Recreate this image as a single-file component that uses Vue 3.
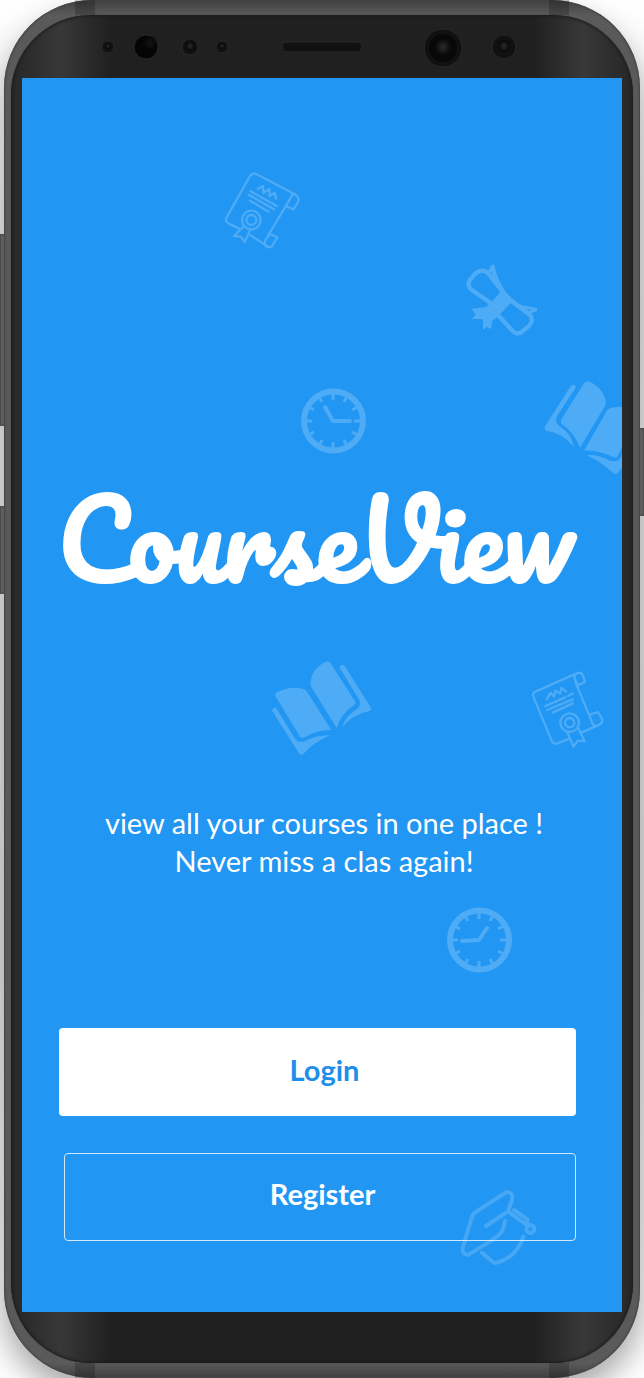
<script setup>
const ticks = Array.from({ length: 12 }, (_, i) => ({ angle: i * 30, inner: i % 3 === 0 ? 21 : 22 }))
const clocks = [
  { x: 333, y: 421, hands: 'M-8 -14L0 0H17' },
  { x: 479, y: 940, hands: 'M8 -12L0 0L-17 1' },
]
</script>

<template>
  <div class="page">
    <span class="key volume"></span>
    <span class="key assistant"></span>
    <span class="key power"></span>
    <div class="phone">
      <i class="seam top-left"></i><i class="seam top-right"></i>
      <i class="seam bottom-left"></i><i class="seam bottom-right"></i>
      <div class="bezel">
        <svg class="sensors" viewBox="11 15 622 63" aria-hidden="true">
          <defs>
            <radialGradient id="lens">
              <stop offset="0" stop-color="#2b2b2b" />
              <stop offset="1" stop-color="#050505" />
            </radialGradient>
          </defs>
          <g fill="#111" stroke="#282828">
            <circle cx="108" cy="47" r="6" />
            <circle cx="146" cy="47" r="12" fill="#050505" />
            <circle cx="190" cy="47" r="8" />
            <circle cx="222" cy="47" r="6" />
            <rect x="282" y="42" width="80" height="10" rx="5" />
            <circle cx="443" cy="48" r="19" />
            <circle cx="504" cy="47" r="12" />
          </g>
          <circle cx="443" cy="48" r="14" fill="#080808" />
          <circle cx="150" cy="43" r="7" fill="url(#lens)" opacity="0.4" />
          <g fill="url(#lens)">
            <circle cx="108" cy="46" r="3" />
            <circle cx="190" cy="46" r="5" />
            <circle cx="222" cy="46" r="3" />
            <circle cx="443" cy="47" r="9" />
            <circle cx="504" cy="46" r="6" />
          </g>
        </svg>

        <main class="screen">
          <svg class="doodles" viewBox="22 78 600 1234" preserveAspectRatio="xMidYMin slice" aria-hidden="true">
            <!-- certificates -->
            <g class="line" transform="translate(210 160) scale(.3333)">
              <path d="M88 206L55 190Q44 184 50 172L120 48Q128 36 140 43L253 102Q272 112 262 130L250 148L228 138L240 116Q246 104 253 102M236 124L166 240M122 226L172 259M166 240Q160 262 178 262Q186 262 190 252L202 232L180 222L166 240" />
              <circle cx="124" cy="180" r="28" /><circle cx="124" cy="180" r="15" />
              <path d="M98 202L72 228L92 230L104 246L120 212M122 94L180 127M186 130L200 138M116 104L192 148M120 122L176 155M143 87L159 78L160 99L178 87L179 108L194 98L198 116" />
            </g>
            <g class="line" transform="translate(520 660) scale(.3333)">
              <path d="M148 236L112 250Q102 254 96 244L40 110Q36 100 48 94L170 40Q186 34 190 50L195 66L174 76L164 56Q160 44 170 40M166 66L216 186M208 164L234 156L246 176Q250 190 234 196Q220 200 216 188L208 164M234 196L184 218" />
              <circle cx="149" cy="188" r="28" /><circle cx="149" cy="188" r="14" />
              <path d="M142 216L160 260L174 242L194 244L176 206M76 138L136 112M144 108L158 101M82 150L158 118M98 158L158 130M80 118L92 98L102 110L106 92L120 100L124 84L138 94" />
            </g>
            <!-- rolled diploma -->
            <g class="solid" transform="translate(455 250) scale(.3333)">
              <path class="roll" d="M108 160L48 118Q34 104 46 88L62 70Q80 56 98 68L140 122M128 194L174 244Q186 256 200 246L224 226Q236 210 226 196L166 150" />
              <path fill-rule="evenodd" d="M98 68Q106 44 114 43Q120 44 120 52Q124 82 150 122Q176 156 202 166L244 173Q250 179 244 184L222 192Q198 184 168 158L128 200L112 212L108 238L96 230L84 240L84 208L50 206L62 194L50 176L92 172L110 156L136 126Q112 96 98 68ZM108 62L107 74L114 80ZM208 178L222 183L232 179Z" />
            </g>
            <!-- open books -->
            <g class="solid" transform="translate(530 370) scale(.3333)">
              <path d="M122 48Q134 40 138 52L80 140Q74 156 88 168Q124 190 132 230Q96 188 48 182Q42 176 46 168Z" />
              <path d="M162 40Q170 30 182 36Q232 66 226 106L150 234Q134 190 96 162Q90 156 94 148Z" />
              <path d="M232 120Q244 106 290 113V206L264 256Q262 264 252 262Q200 238 162 242Z" />
              <path d="M170 256Q200 252 240 272Q258 278 270 266L290 232V276L264 308Q258 314 250 310Q210 272 170 256Z" />
            </g>
            <g class="solid" transform="translate(260 650) scale(.3333)">
              <path d="M46 138Q44 130 52 126Q100 104 138 120L214 240Q170 240 134 262Q124 266 120 260Z" />
              <path d="M152 108Q148 60 200 34Q208 32 212 40L284 152Q290 160 282 166Q244 190 230 234Z" />
              <path d="M36 182Q40 168 50 176L104 264Q114 280 134 274Q170 254 210 256Q160 278 130 312Q122 318 116 308Z" />
              <path d="M238 52Q244 40 254 48L332 172Q336 182 326 184Q280 192 246 232Q254 200 292 176Q304 166 298 150Z" />
            </g>
            <!-- clocks -->
            <g v-for="clock in clocks" :key="clock.y" class="clock" :transform="`translate(${clock.x} ${clock.y})`">
              <circle cx=".5" r="29.5" />
              <path v-for="tick in ticks" :key="tick.angle" class="tick" :d="`M0 -27V-${tick.inner}`" :transform="`rotate(${tick.angle})`" />
              <path class="hands" :d="clock.hands" />
            </g>
            <!-- graduation cap -->
            <g class="line cap" transform="translate(440 1140) scale(.3333)">
              <path d="M138 258L204 214L216 180Q220 156 200 156L104 218Q98 222 96 230L68 324Q66 346 86 344L160 298Q192 280 195 242M204 214L262 256M222 210L262 238V250M126 338L164 370Q230 354 250 290" />
              <circle cx="271" cy="267" r="12" />
            </g>
          </svg>

          <h1 class="logo">CourseView</h1>
          <p class="tagline">view all your courses in one place !<br />Never miss a clas again!</p>
          <div class="actions">
            <button class="btn login" type="button">Login</button>
            <button class="btn register" type="button">Register</button>
          </div>
        </main>
      </div>
    </div>
  </div>
</template>

<style>
body {
  margin: 0;
  background: #fff;
}
</style>

<style scoped>
.page {
  position: relative;
  min-height: 100vh;
  padding: 0 4px;
  box-sizing: border-box;
  overflow: hidden;
  background: linear-gradient(#fff, #eee 15%, #e6e6e6 70%, #fff);
  font-family: Lato, "Open Sans", sans-serif;
}
.phone {
  position: relative;
  padding: 15px 7px;
  border-radius: 88px;
  background: linear-gradient(#404040, #5a5a5a 15px, #5a5a5a calc(100% - 15px), #404040);
  box-shadow: inset 0 0 2px 1px #444, 0 16px 32px rgba(0, 0, 0, 0.35);
}
.key {
  position: absolute;
  width: 6px;
  background: #707070;
  box-shadow: inset 0 0 1px 1px #585858;
}
.volume { left: 0; top: 234px; height: 192px; }
.assistant { left: 0; top: 506px; height: 88px; }
.power { right: 0; top: 428px; height: 88px; }
.seam {
  position: absolute;
  width: 20px;
  height: 15px;
  background: rgba(0, 0, 0, 0.2);
}
.top-left { top: 0; left: 71px; }
.top-right { top: 0; right: 71px; }
.bottom-left { bottom: 0; left: 71px; }
.bottom-right { bottom: 0; right: 71px; }
.bezel {
  position: relative;
  padding: 0 11px 51px;
  border-radius: 80px;
  background: linear-gradient(90deg, #282828, #2d2d2d 20px, #383838 50px, #202020 100px, #202020 calc(100% - 100px), #383838 calc(100% - 50px), #2d2d2d calc(100% - 20px), #282828);
  box-shadow: inset 0 0 3px 1px #1c1c1c, 0 0 1px #222;
}
.sensors {
  display: block;
  width: calc(100% + 22px);
  height: 63px;
  margin: 0 -11px;
}
.screen {
  position: relative;
  display: flex;
  flex-direction: column;
  min-height: calc(100vh - 144px);
  box-sizing: border-box;
  padding: 400px 37px 71px;
  overflow: hidden;
  background: #2196f3;
  color: #fff;
}
.doodles {
  position: absolute;
  inset: 0;
  width: 100%;
  height: 100%;
  z-index: 1;
  pointer-events: none;
}
.line {
  fill: none;
  stroke: #fff;
  stroke-width: 7;
  stroke-linecap: round;
  stroke-linejoin: round;
  opacity: 0.2;
}
.cap {
  stroke-width: 12;
  opacity: 0.17;
}
.solid {
  fill: #fff;
  opacity: 0.2;
}
.roll {
  fill: none;
  stroke: #fff;
  stroke-width: 13;
}
.clock {
  fill: none;
  stroke: #fff;
  stroke-width: 6;
  opacity: 0.2;
}
.tick { stroke-width: 3; }
.hands {
  stroke-width: 4;
  stroke-linecap: round;
  stroke-linejoin: round;
}
.logo {
  display: flex;
  justify-content: center;
  margin: 0;
  padding-right: 14px;
  font-family: Pacifico, cursive;
  font-size: 104px;
  font-weight: 400;
  line-height: 120px;
  white-space: nowrap;
  -webkit-text-stroke: 2px #fff;
}
.tagline {
  margin: 206px 0 0;
  padding-left: 4px;
  font-size: 29px;
  line-height: 38px;
  text-align: center;
  white-space: nowrap;
}
.actions {
  display: flex;
  flex-direction: column;
  gap: 37px;
  margin-top: 148px;
  padding-right: 9px;
}
.btn {
  height: 88px;
  border-radius: 4px;
  font-family: inherit;
  font-size: 29px;
  font-weight: 700;
  cursor: pointer;
}
.login {
  padding: 0 0 6px 14px;
  border: 0;
  background: #fff;
  color: #1d8eea;
}
.register {
  margin-left: 5px;
  padding: 0 0 8px 5px;
  border: 1px solid #cfe8fc;
  background: transparent;
  color: #fff;
}
</style>
